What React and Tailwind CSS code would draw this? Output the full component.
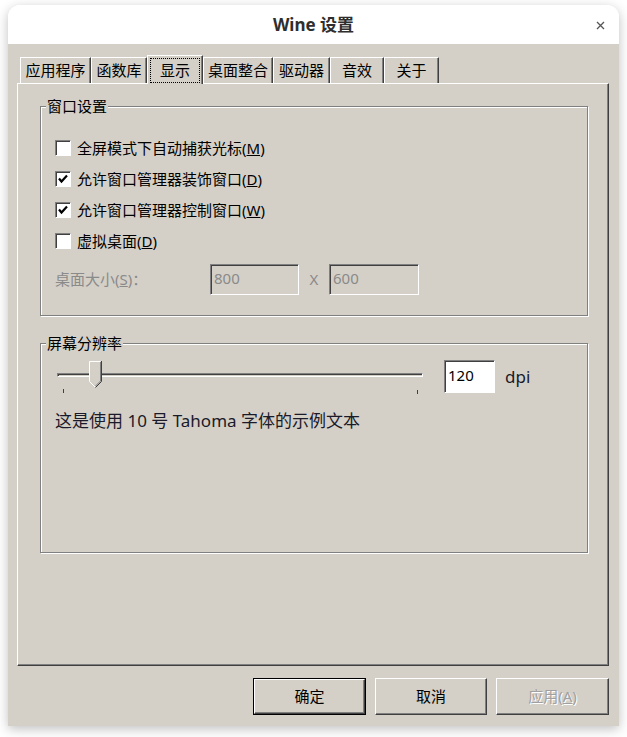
import React from 'react';

const font = { fontFamily: '"Noto Sans", "Noto Sans CJK SC", sans-serif' };

const tabs = [
  { label: '应用程序', w: 'w-[71px]' },
  { label: '函数库', w: 'w-[56px]' },
  { label: '显示', w: 'w-[56px]', active: true },
  { label: '桌面整合', w: 'w-[70px]' },
  { label: '驱动器', w: 'w-[57px]' },
  { label: '音效', w: 'w-[54px]' },
  { label: '关于', w: 'w-[55px]' },
];

const Check = ({ checked, children }) => (
  <div className="flex items-center h-[31px]">
    <div className="w-[16px] h-[16px] bg-white border border-t-[#808080] border-l-[#808080] border-r-white border-b-white shadow-[inset_1px_1px_0_#404040] flex items-center justify-center">
      {checked && (
        <svg width="12" height="12" viewBox="0 0 12 12">
          <path d="M2 5.5 L4.5 8.5 L10 2.5" stroke="#000" strokeWidth="2.2" fill="none" />
        </svg>
      )}
    </div>
    <span className="ml-[6px] text-[15px] text-black leading-[20px]">{children}</span>
  </div>
);

const Group = ({ title, className, children }) => (
  <div className={`relative border border-[#808080] shadow-[inset_1px_1px_0_#fff,1px_1px_0_#fff] ${className}`}>
    <span className="absolute -top-[11px] left-[5px] px-[1px] bg-[#d4d0c8] text-[15px] leading-[20px] text-black">{title}</span>
    {children}
  </div>
);

const Thumb = () => (
  <svg width="13" height="27" viewBox="0 0 13 27" className="absolute left-[32px] top-[1px]">
    <polygon points="0,0 12,0 12,20 6,26 0,20" fill="#d4d0c8" />
    <path d="M0.5 20.5 L0.5 0.5 L11.5 0.5" stroke="#fff" fill="none" />
    <path d="M0.5 20.5 L6 26" stroke="#fff" fill="none" />
    <path d="M12.5 0 L12.5 20.5 L6.5 26.5" stroke="#404040" fill="none" />
    <path d="M11.5 1 L11.5 20 L6.5 25" stroke="#808080" fill="none" />
  </svg>
);

const Btn = ({ children, isDefault, disabled, w }) => {
  const inner = (
    <div className={`h-full flex items-center justify-center border border-t-white border-l-white border-r-[#404040] border-b-[#404040] shadow-[inset_-1px_-1px_0_#808080] text-[15px] ${disabled ? 'text-[#a0a0a0] [text-shadow:1px_1px_0_#fff]' : 'text-black'}`}>
      {children}
    </div>
  );
  if (isDefault) {
    return <div className={`${w} h-[37px] border border-black`}>{inner}</div>;
  }
  return <div className={`${w} h-[37px]`}>{inner}</div>;
};

export default function App() {
  return (
    <div className="w-[627px] h-[737px] bg-white pt-[5px] pl-[8px]" style={font}>
      <div className="w-[611px] h-[721px] rounded-t-[12px] shadow-[0_3px_12px_rgba(0,0,0,0.25)] flex flex-col overflow-hidden">
        {/* title bar */}
        <div className="h-[39px] bg-white relative flex items-center justify-center">
          <span className="text-[17px] font-bold text-[#2e2e2e]">Wine 设置</span>
          <svg width="9" height="9" viewBox="0 0 9 9" className="absolute right-[14px] top-[16px]">
            <path d="M1 1 L8 8 M8 1 L1 8" stroke="#555" strokeWidth="1.3" />
          </svg>
        </div>

        {/* body */}
        <div className="flex-1 bg-[#d4d0c8] pt-[11px] pl-[9px] pr-[10px] pb-[11px] flex flex-col">
          <div className="h-[28px] flex items-end pl-[3px]">
            {tabs.map((t) =>
              t.active ? (
                <div key={t.label} className={`${t.w} h-[29px] -mb-[1px] relative z-10 bg-[#d4d0c8] border-t border-l border-t-white border-l-white border-r border-r-[#404040] shadow-[inset_-1px_0_0_#808080] flex items-center justify-center text-[15px] text-black`}>
                  <span className="absolute left-[2px] right-[2px] top-[2px] bottom-[1px] border border-dotted border-black" />
                  {t.label}
                </div>
              ) : (
                <div key={t.label} className={`${t.w} h-[26px] border-t border-l border-t-white border-l-white border-r border-r-[#404040] shadow-[inset_-1px_0_0_#808080] flex items-center justify-center text-[15px] text-black`}>
                  {t.label}
                </div>
              )
            )}
          </div>

          {/* panel */}
          <div className="h-[583px] border border-t-white border-l-white border-r-[#404040] border-b-[#404040] shadow-[inset_-1px_-1px_0_#808080] pt-[22px] pl-[22px] pr-[20px]">
            <Group title="窗口设置" className="h-[210px] pt-[25px] pl-[14px]">
              <Check>全屏模式下自动捕获光标(<u>M</u>)</Check>
              <Check checked>允许窗口管理器装饰窗口(<u>D</u>)</Check>
              <Check checked>允许窗口管理器控制窗口(<u>W</u>)</Check>
              <Check>虚拟桌面(<u>D</u>)</Check>
              <div className="mt-[8px] h-[31px] flex items-center text-[15px] text-[#8a8a8a]">
                <span className="w-[155px]">桌面大小(<u>S</u>)：</span>
                <div className="w-[89px] h-[31px] border border-t-[#808080] border-l-[#808080] border-r-white border-b-white shadow-[inset_1px_1px_0_#404040] pl-[3px] leading-[26px]">800</div>
                <span className="w-[30px] text-center">X</span>
                <div className="w-[90px] h-[31px] border border-t-[#808080] border-l-[#808080] border-r-white border-b-white shadow-[inset_1px_1px_0_#404040] pl-[3px] leading-[26px]">600</div>
              </div>
            </Group>

            <Group title="屏幕分辨率" className="mt-[27px] h-[210px] pt-[16px] pl-[16px]">
              <div className="flex items-center h-[33px]">
                <div className="relative w-[366px] h-[33px]">
                  <div className="absolute left-0 right-0 top-[13px] h-[4px] bg-[#d4d0c8] border border-t-[#808080] border-l-[#808080] border-r-white border-b-white shadow-[inset_1px_1px_0_#404040]" />
                  <Thumb />
                  <div className="absolute left-[6px] top-[29px] w-[1px] h-[4px] bg-[#404040]" />
                  <div className="absolute left-[360px] top-[30px] w-[1px] h-[4px] bg-[#404040]" />
                </div>
                <div className="ml-[21px] w-[51px] h-[33px] bg-white border border-t-[#808080] border-l-[#808080] border-r-white border-b-white shadow-[inset_1px_1px_0_#404040] pl-[3px] text-[15px] leading-[28px] text-black">120</div>
                <span className="ml-[10px] text-[17px] text-[#1a1a2a]">dpi</span>
              </div>
              <div className="mt-[16px] pl-[-2px] text-[17px] leading-[24px] text-[#1a1a2a] -ml-[2px]">这是使用 10 号 Tahoma 字体的示例文本</div>
            </Group>
          </div>

          {/* buttons */}
          <div className="mt-[12px] flex justify-end gap-[9px]">
            <Btn isDefault w="w-[113px]">确定</Btn>
            <Btn w="w-[112px]">取消</Btn>
            <Btn disabled w="w-[113px]">应用(<u>A</u>)</Btn>
          </div>
        </div>
      </div>
    </div>
  );
}
